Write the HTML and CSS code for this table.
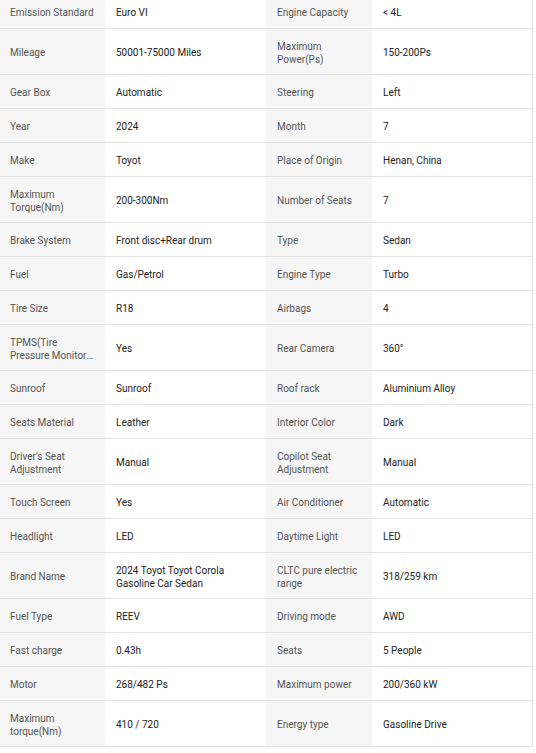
FILE: index.html
```html
<!DOCTYPE html>
<html>
<head>
<meta charset="utf-8">
<link rel="stylesheet" href="styles.css">
</head>
<body>
<div class="specs">
  <div class="row"><div class="k">Emission Standard</div><div class="v">Euro VI</div><div class="k">Engine Capacity</div><div class="v">&lt; 4L</div></div>
  <div class="row tall"><div class="k">Mileage</div><div class="v">50001-75000 Miles</div><div class="k">Maximum Power(Ps)</div><div class="v">150-200Ps</div></div>
  <div class="row"><div class="k">Gear Box</div><div class="v">Automatic</div><div class="k">Steering</div><div class="v">Left</div></div>
  <div class="row"><div class="k">Year</div><div class="v">2024</div><div class="k">Month</div><div class="v">7</div></div>
  <div class="row"><div class="k">Make</div><div class="v">Toyot</div><div class="k">Place of Origin</div><div class="v">Henan, China</div></div>
  <div class="row tall"><div class="k">Maximum Torque(Nm)</div><div class="v">200-300Nm</div><div class="k">Number of Seats</div><div class="v">7</div></div>
  <div class="row"><div class="k">Brake System</div><div class="v">Front disc+Rear drum</div><div class="k">Type</div><div class="v">Sedan</div></div>
  <div class="row"><div class="k">Fuel</div><div class="v">Gas/Petrol</div><div class="k">Engine Type</div><div class="v">Turbo</div></div>
  <div class="row"><div class="k">Tire Size</div><div class="v">R18</div><div class="k">Airbags</div><div class="v">4</div></div>
  <div class="row tall"><div class="k"><div class="two"><span class="ln">TPMS(Tire</span><span class="ln ell">Pressure Monitoring System)</span></div></div><div class="v">Yes</div><div class="k">Rear Camera</div><div class="v">360°</div></div>
  <div class="row"><div class="k">Sunroof</div><div class="v">Sunroof</div><div class="k">Roof rack</div><div class="v">Aluminium Alloy</div></div>
  <div class="row"><div class="k">Seats Material</div><div class="v">Leather</div><div class="k">Interior Color</div><div class="v">Dark</div></div>
  <div class="row tall"><div class="k">Driver's Seat Adjustment</div><div class="v">Manual</div><div class="k">Copilot Seat Adjustment</div><div class="v">Manual</div></div>
  <div class="row"><div class="k">Touch Screen</div><div class="v">Yes</div><div class="k">Air Conditioner</div><div class="v">Automatic</div></div>
  <div class="row"><div class="k">Headlight</div><div class="v">LED</div><div class="k">Daytime Light</div><div class="v">LED</div></div>
  <div class="row tall"><div class="k">Brand Name</div><div class="v">2024 Toyot Toyot Corola Gasoline Car Sedan</div><div class="k">CLTC pure electric range</div><div class="v">318/259 km</div></div>
  <div class="row"><div class="k">Fuel Type</div><div class="v">REEV</div><div class="k">Driving mode</div><div class="v">AWD</div></div>
  <div class="row"><div class="k">Fast charge</div><div class="v">0.43h</div><div class="k">Seats</div><div class="v">5 People</div></div>
  <div class="row"><div class="k">Motor</div><div class="v">268/482 Ps</div><div class="k">Maximum power</div><div class="v">200/360 kW</div></div>
  <div class="row tall"><div class="k">Maximum torque(Nm)</div><div class="v">410 / 720</div><div class="k">Energy type</div><div class="v">Gasoline Drive</div></div>
</div>
</body>
</html>
```
FILE: styles.css
```css
html, body {
  margin: 0;
  padding: 0;
  background: #ffffff;
}
body {
  font-family: Roboto, "Liberation Sans", sans-serif;
  font-size: 10px;
  line-height: 13px;
}
.specs {
  width: 534px;
  margin-top: -5px;
  margin-left: -1px;
  border-right: 1px solid #e2e2e2;
  box-sizing: border-box;
}
.row {
  display: grid;
  grid-template-columns: 106px 161px 106px 160px;
  border-bottom: 1px solid #e2e2e2;
}
.k, .v {
  display: flex;
  align-items: center;
  box-sizing: border-box;
  height: 33px;
  padding: 2px 11px 0;
  overflow: hidden;
}
.tall .k, .tall .v {
  height: 45px;
}
.k {
  background: #f6f6f6;
  color: #555555;
}
.v {
  background: #ffffff;
  color: #222222;
}
.two {
  display: flex;
  flex-direction: column;
  width: 100%;
  min-width: 0;
}
.ln {
  display: block;
  white-space: nowrap;
}
.ell {
  overflow: hidden;
  text-overflow: ellipsis;
}
```
